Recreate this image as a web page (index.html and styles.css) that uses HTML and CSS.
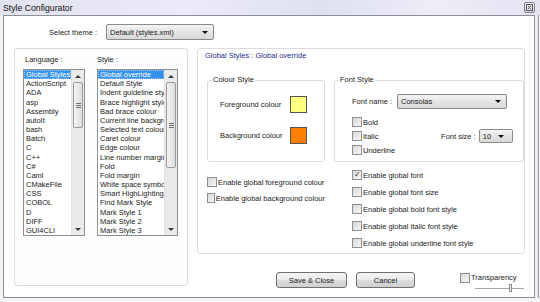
FILE: index.html
```html
<html>
    <head>
        <link rel="stylesheet" href="styles.css">
    </head>
    <body>
        <div class="titlebar">
            <span class="title">Style Configurator</span>
            <span class="close">
                <svg width="7" height="7" viewBox="0 0 7 7"><rect x="0.5" y="0.5" width="6" height="6" fill="none" stroke="#555" stroke-width="1"/><path d="M2 2 L5 5 M5 2 L2 5" stroke="#555" stroke-width="1"/></svg>
            </span>
        </div>
        <div class="frame">
            <div class="theme-row">
                <div class="theme-label">Select theme :</div>
                <div class="combo theme-combo"><span>Default (styles.xml)</span><span class="arrow"></span></div>
            </div>
            <div class="main">
                <div class="left-panel">
                    <div class="list-col lang-col">
                        <div class="col-label">Language :</div>
                        <div class="listbox">
                            <ul class="items">
                                <li class="sel">Global Styles</li>
                                <li>ActionScript</li>
                                <li>ADA</li>
                                <li>asp</li>
                                <li>Assembly</li>
                                <li>autoIt</li>
                                <li>bash</li>
                                <li>Batch</li>
                                <li>C</li>
                                <li>C++</li>
                                <li>C#</li>
                                <li>Caml</li>
                                <li>CMakeFile</li>
                                <li>CSS</li>
                                <li>COBOL</li>
                                <li>D</li>
                                <li>DIFF</li>
                                <li>GUI4CLI</li>
                            </ul>
                            <div class="vscroll">
                                <div class="sb-btn"><span class="up"></span></div>
                                <div class="sb-track">
                                    <div class="thumb lang-thumb"><span class="grip"></span></div>
                                </div>
                                <div class="sb-btn"><span class="down"></span></div>
                            </div>
                        </div>
                    </div>
                    <div class="list-col style-col">
                        <div class="col-label">Style :</div>
                        <div class="listbox">
                            <ul class="items">
                                <li class="sel">Global override</li>
                                <li>Default Style</li>
                                <li>Indent guideline style</li>
                                <li>Brace highlight style</li>
                                <li>Bad brace colour</li>
                                <li>Current line background colour</li>
                                <li>Selected text colour</li>
                                <li>Caret colour</li>
                                <li>Edge colour</li>
                                <li>Line number margin</li>
                                <li>Fold</li>
                                <li>Fold margin</li>
                                <li>White space symbol</li>
                                <li>Smart HighLighting</li>
                                <li>Find Mark Style</li>
                                <li>Mark Style 1</li>
                                <li>Mark Style 2</li>
                                <li>Mark Style 3</li>
                            </ul>
                            <div class="vscroll">
                                <div class="sb-btn"><span class="up"></span></div>
                                <div class="sb-track">
                                    <div class="thumb style-thumb"><span class="grip"></span></div>
                                </div>
                                <div class="sb-btn"><span class="down"></span></div>
                            </div>
                        </div>
                    </div>
                </div>

                <div class="right-col">
                    <div class="right-panel">
                        <div class="heading">Global Styles : Global override</div>
                        <div class="groups">
                            <div class="gcol gcol-left">
                                <fieldset class="group colour-group">
                                    <legend>Colour Style</legend>
                                    <div class="group-body">
                                        <div class="swatch-row">
                                            <span class="swatch-label">Foreground colour</span>
                                            <span class="swatch fg"></span>
                                        </div>
                                        <div class="swatch-row">
                                            <span class="swatch-label">Background colour</span>
                                            <span class="swatch bg"></span>
                                        </div>
                                    </div>
                                </fieldset>
                                <div class="checks checks-left">
                                    <div class="check"><span class="box"></span>Enable global foreground colour</div>
                                    <div class="check"><span class="box"></span>Enable global background colour</div>
                                </div>
                            </div>
                            <div class="gcol gcol-right">
                                <fieldset class="group font-group">
                                    <legend>Font Style</legend>
                                    <div class="group-body font-body">
                                        <div class="font-name-row">
                                            <span class="font-name-label">Font name :</span>
                                            <div class="combo font-combo"><span>Consolas</span><span class="arrow"></span></div>
                                        </div>
                                        <div class="font-lower">
                                            <div class="font-checks">
                                                <div class="check"><span class="box"></span>Bold</div>
                                                <div class="check"><span class="box"></span>Italic</div>
                                                <div class="check"><span class="box"></span>Underline</div>
                                            </div>
                                            <div class="font-size">
                                                <span>Font size :</span>
                                                <div class="combo size-combo"><span>10</span><span class="arrow"></span></div>
                                            </div>
                                        </div>
                                    </div>
                                </fieldset>
                                <div class="checks checks-right">
                                    <div class="check"><span class="box checked">&#10003;</span>Enable global font</div>
                                    <div class="check"><span class="box"></span>Enable global font size</div>
                                    <div class="check"><span class="box"></span>Enable global bold font style</div>
                                    <div class="check"><span class="box"></span>Enable global italic font style</div>
                                    <div class="check"><span class="box"></span>Enable global underline font style</div>
                                </div>
                            </div>
                        </div>
                    </div>

                    <div class="button-row">
                        <button class="btn save">Save &amp; Close</button>
                        <button class="btn cancel">Cancel</button>
                        <div class="transparency">
                            <div class="check"><span class="box"></span>Transparency</div>
                            <div class="slider"><span class="slider-thumb"></span></div>
                        </div>
                    </div>
                </div>
            </div>
        </div>
    </body>
</html>
```

FILE: styles.css
```css
body {
    margin: 0;
    width: 540px;
    height: 302px;
    overflow: hidden;
    background: #f4f4f7;
    font-family: "Liberation Sans", Arial, sans-serif;
    font-size: 7.5px;
    color: #1c1c1c;
}

.titlebar {
    height: 15px;
    display: flex;
    align-items: center;
    justify-content: space-between;
    padding: 0 5px 0 3px;
    background: linear-gradient(to right, #e2e3f0, #ecebf7 35%, #dfe1ef 60%, #eeedf8 80%, #e4e5f1);
}
.title {
    font-size: 8.7px;
    color: #111;
}
.close {
    width: 9px;
    height: 9px;
    border: 1px solid #80808c;
    border-radius: 2px;
    background: linear-gradient(#f8f8fb, #d9dae3);
    display: flex;
    align-items: center;
    justify-content: center;
}

.frame {
    margin-left: 3px;
    width: 532px;
    height: 283px;
    box-sizing: border-box;
    border: 1px solid #8e8e96;
    background: #fff;
    box-shadow: 1px 0 0 #f3f3f6, 2px 0 0 #f3f3f6, 3px 0 0 #e2e2e8, 4px 0 0 #9c9ca4;
}

.theme-row {
    display: flex;
    align-items: center;
    margin-top: 8px;
    height: 16px;
}
.theme-label {
    width: 93px;
    text-align: right;
    margin-right: 9px;
}

.combo {
    box-sizing: border-box;
    display: flex;
    align-items: center;
    justify-content: space-between;
    border: 1px solid #8a8a8a;
    border-radius: 2px;
    background: linear-gradient(#f5f5f5, #e4e4e4 50%, #d9d9d9);
    padding: 0 5px 0 3px;
}
.theme-combo {
    width: 108px;
    height: 16px;
}
.arrow {
    width: 0;
    height: 0;
    border-left: 3px solid transparent;
    border-right: 3px solid transparent;
    border-top: 3px solid #111;
}

.main {
    display: flex;
    margin-top: 8px;
}

.left-panel {
    display: flex;
    margin-left: 10px;
    width: 174px;
    height: 238px;
    box-sizing: border-box;
    border: 1px solid #dcdcdc;
    border-radius: 3px;
    background: #fdfdfd;
    padding-top: 5px;
}
.lang-col {
    margin-left: 8px;
    width: 62px;
}
.style-col {
    margin-left: 12px;
    width: 81px;
}
.col-label {
    height: 12px;
    line-height: 12px;
    padding-left: 2px;
    margin-bottom: 3px;
}
.style-col .col-label {
    padding-left: 0;
}

.listbox {
    display: flex;
    height: 167px;
    box-sizing: border-box;
    border: 1px solid #8b9097;
    background: #fff;
}
.items {
    flex: 1;
    list-style: none;
    margin: 0;
    padding: 0;
    overflow: hidden;
}
.items li {
    height: 9.18px;
    line-height: 9.18px;
    padding-left: 2px;
    white-space: nowrap;
    overflow: hidden;
}
.items li.sel {
    background: #3592ea;
    color: #fff;
    outline: 1px dotted #9cc6f2;
    outline-offset: -1px;
}

.vscroll {
    width: 12px;
    display: flex;
    flex-direction: column;
    background: #eaeaea;
    border-left: 1px solid #e2e2e2;
}
.sb-btn {
    height: 12px;
    display: flex;
    align-items: center;
    justify-content: center;
}
.sb-track {
    flex: 1;
    position: relative;
}
.up, .down {
    width: 0;
    height: 0;
    border-left: 3px solid transparent;
    border-right: 3px solid transparent;
}
.up {
    border-bottom: 3px solid #3a3a3a;
}
.down {
    border-top: 3px solid #3a3a3a;
}
.thumb {
    position: absolute;
    left: 1px;
    right: 1px;
    box-sizing: border-box;
    border: 1px solid #9c9c9c;
    border-radius: 2px;
    background: linear-gradient(to right, #f4f4f4, #dedede);
    display: flex;
    align-items: center;
    justify-content: center;
}
.lang-thumb {
    top: 0;
    height: 46px;
}
.style-thumb {
    top: 0;
    height: 86px;
}
.grip {
    width: 5px;
    height: 5px;
    background: repeating-linear-gradient(#6c6c6c 0 1px, transparent 1px 2px);
}

.right-col {
    margin-left: 9px;
    width: 328px;
}
.right-panel {
    height: 206px;
    box-sizing: border-box;
    border: 1px solid #dcdcdc;
    border-radius: 3px;
    background: #fff;
}
.heading {
    line-height: 12px;
    padding: 1px 0 0 7px;
    color: #1f2d8c;
}

.groups {
    display: flex;
    margin-top: 13px;
}
.gcol-left {
    margin-left: 9px;
    width: 118px;
}
.gcol-right {
    margin-left: 9px;
    width: 190px;
}

.group {
    margin: 0;
    padding: 0;
    min-width: 0;
    height: 87px;
    box-sizing: border-box;
    border: 1px solid #d5dde3;
    border-radius: 3px;
}
.group legend {
    margin-left: 4px;
    padding: 0 1px;
    line-height: 10px;
}

.group-body {
    padding: 11px 0 0 12px;
}
.swatch-row {
    display: flex;
    align-items: center;
    height: 17px;
    margin-bottom: 14px;
}
.swatch-label {
    width: 70px;
}
.swatch {
    width: 17px;
    height: 17px;
    box-sizing: border-box;
    border: 1px solid #555;
}
.fg {
    background: #ffff80;
}
.bg {
    background: #ff8000;
}

.font-body {
    padding: 9px 0 0 17px;
}
.font-name-row {
    display: flex;
    align-items: center;
    height: 15px;
}
.font-name-label {
    width: 45px;
}
.font-combo {
    width: 110px;
    height: 15px;
}
.font-lower {
    display: flex;
    align-items: center;
    margin-top: 6px;
}
.font-checks .check {
    height: 14px;
}
.font-size {
    display: flex;
    align-items: center;
    margin-left: 46px;
}
.font-size span {
    margin-right: 3px;
}
.size-combo {
    width: 34px;
    height: 14px;
}

.check {
    display: flex;
    align-items: center;
    white-space: nowrap;
}
.box {
    width: 10px;
    height: 10px;
    box-sizing: border-box;
    border: 1px solid #8f8f8f;
    background: linear-gradient(135deg, #d8d8d8, #f7f7f7);
    margin-right: 1px;
    font-size: 8px;
    line-height: 8px;
    text-align: center;
    color: #333;
}
.checks-left {
    margin-top: 14px;
}
.checks-left .check {
    height: 12px;
    margin-bottom: 4px;
}
.checks-right {
    margin-top: 7px;
    margin-left: 18px;
}
.checks-right .check {
    height: 12px;
    margin-bottom: 5px;
}

.button-row {
    display: flex;
    align-items: flex-start;
    margin-top: 18px;
}
.btn {
    height: 16px;
    box-sizing: border-box;
    border: 1px solid #707070;
    border-radius: 3px;
    background: linear-gradient(#f3f3f3, #ebebeb 50%, #dcdcdc 51%, #d0d0d0);
    font-family: "Liberation Sans", Arial, sans-serif;
    font-size: 7.5px;
    color: #1c1c1c;
    padding: 0;
}
.save {
    margin-left: 79px;
    width: 71px;
}
.cancel {
    margin-left: 9px;
    width: 59px;
}
.transparency {
    margin-left: 45px;
}
.transparency .check {
    height: 11px;
}
.slider {
    position: relative;
    margin: 5px 0 0 15px;
    width: 49px;
    height: 1px;
    background: #a8a8a8;
}
.slider-thumb {
    position: absolute;
    left: 34px;
    top: -4px;
    width: 3px;
    height: 8px;
    box-sizing: border-box;
    border: 1px solid #8a8a8a;
    background: #f0f0f0;
}
```
